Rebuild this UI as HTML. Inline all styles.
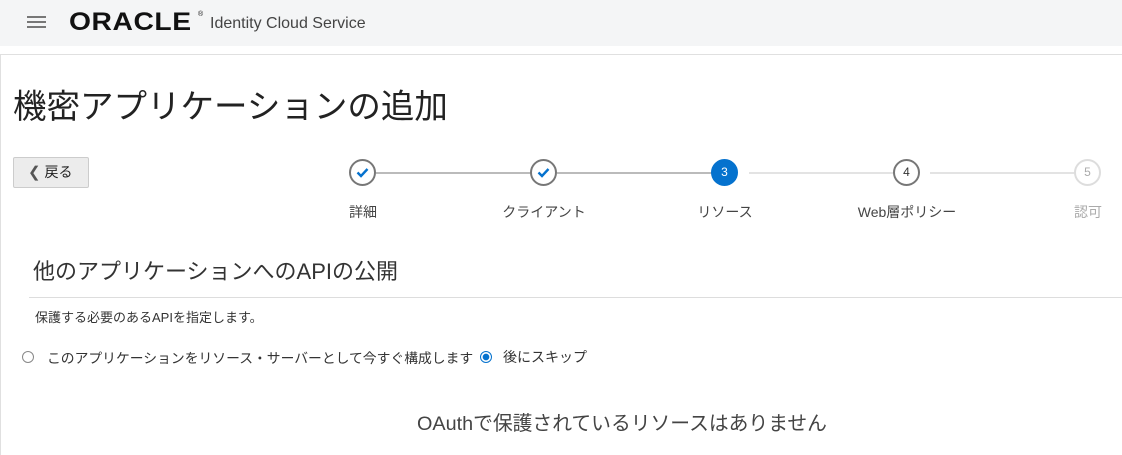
<!DOCTYPE html>
<html><head><meta charset="utf-8"><style>
body{margin:0;width:1122px;height:455px;overflow:hidden;background:#fff;font-family:"Liberation Sans","Noto Sans CJK JP",sans-serif;color:#333;position:relative}
.a{position:absolute;white-space:nowrap}
.hdr{left:0;top:0;width:1122px;height:46px;background:#f4f5f6}
.c{position:absolute;width:23px;height:23px;border-radius:50%;border:2px solid #777;background:#fff;text-align:center;line-height:23px;font-size:12px;color:#333}
.ln{position:absolute;height:2px;top:172px}
.lb{position:absolute;top:202px;font-size:14px;color:#444;transform:translateX(-50%)}
</style></head><body>
<div class="a hdr"></div>
<div class="a" style="left:27px;top:16px;width:19px;height:2px;background:#777;box-shadow:0 5px 0 #777,0 10px 0 #777"></div>
<div class="a" style="left:69px;top:8px;font-size:25px;font-weight:bold;letter-spacing:0.5px;color:#111;transform:scaleX(1.13);transform-origin:left">ORACLE</div>
<div class="a" style="left:198px;top:11px;font-size:7px;color:#111">®</div>
<div class="a" style="left:210px;top:15px;font-size:16px;color:#444">Identity Cloud Service</div>
<div class="a" style="left:0;top:54px;width:1122px;height:1px;background:#e0e0e0"></div>
<div class="a" style="left:0;top:54px;width:1px;height:401px;background:#e0e0e0"></div>
<div class="a" style="left:13px;top:79px;font-size:33.5px;color:#222">機密アプリケーションの追加</div>
<div class="a" style="left:13px;top:157px;width:74px;height:29px;background:#ececec;border:1px solid #ccc;border-radius:2px;font-size:14px;line-height:29px;color:#222"><span style="margin-left:14px;font-size:15px;color:#555">&#10094;</span> 戻る</div>
<div class="ln" style="left:376px;width:156px;background:#bbb"></div>
<div class="ln" style="left:557px;width:155px;background:#bbb"></div>
<div class="ln" style="left:749px;width:146px;background:#e3e3e3"></div>
<div class="ln" style="left:930px;width:145px;background:#e3e3e3"></div>
<div class="c" style="left:349px;top:159px"><svg width="23" height="23" viewBox="0 0 23 23"><path d="M6.5 11.5l3.5 3.5 6.5-7" fill="none" stroke="#0572ce" stroke-width="2.4"/></svg></div>
<div class="c" style="left:530px;top:159px"><svg width="23" height="23" viewBox="0 0 23 23"><path d="M6.5 11.5l3.5 3.5 6.5-7" fill="none" stroke="#0572ce" stroke-width="2.4"/></svg></div>
<div class="c" style="left:711px;top:159px;background:#0572ce;border-color:#0572ce;color:#fff">3</div>
<div class="c" style="left:893px;top:159px">4</div>
<div class="c" style="left:1074px;top:159px;border-color:#ddd;color:#aaa">5</div>
<div class="lb" style="left:363px">詳細</div>
<div class="lb" style="left:544px">クライアント</div>
<div class="lb" style="left:725px">リソース</div>
<div class="lb" style="left:907px">Web層ポリシー</div>
<div class="lb" style="left:1088px;color:#aaa">認可</div>
<div class="a" style="left:33px;top:254px;font-size:22px;color:#333">他のアプリケーションへのAPIの公開</div>
<div class="a" style="left:29px;top:297px;width:1093px;height:1px;background:#ddd"></div>
<div class="a" style="left:35px;top:307px;font-size:13px;color:#333">保護する必要のあるAPIを指定します。</div>
<div class="a" style="left:22px;top:351px;width:10px;height:10px;border:1px solid #888;border-radius:50%"></div>
<div class="a" style="left:47px;top:347px;font-size:13.8px;color:#333">このアプリケーションをリソース・サーバーとして今すぐ構成します</div>
<div class="a" style="left:480px;top:351px;width:10px;height:10px;border:1px solid #0572ce;border-radius:50%;background:radial-gradient(circle,#0572ce 3px,#fff 3.6px)"></div>
<div class="a" style="left:503px;top:347px;font-size:14px;color:#333">後にスキップ</div>
<div class="a" style="left:417px;top:407px;font-size:19.8px;color:#444">OAuthで保護されているリソースはありません</div>
</body></html>
